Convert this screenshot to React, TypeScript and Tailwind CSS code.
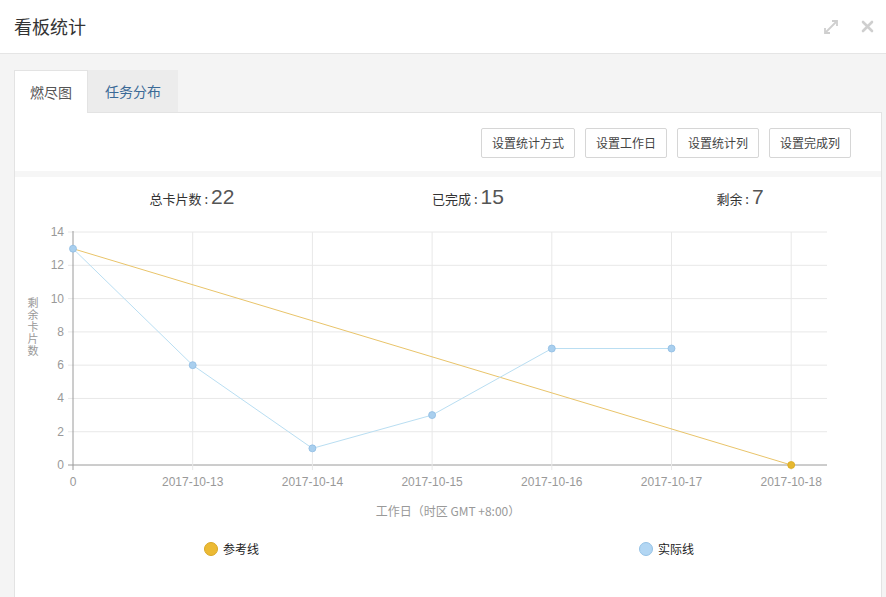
import React from "react";

const actual = [13, 6, 1, 3, 7, 7];
const ticks = ["0", "2017-10-13", "2017-10-14", "2017-10-15", "2017-10-16", "2017-10-17", "2017-10-18"];

// chart coords are relative to the svg (page x=15)
const X0 = 58;
const STEP_X = 119.7;
const Y0 = 252;
const STEP_Y = 16.64;
const px = (i: number) => X0 + i * STEP_X;
const py = (v: number) => Y0 - v * STEP_Y;

function BurnChart() {
  const yVals = [0, 2, 4, 6, 8, 10, 12, 14];
  const pts = actual.map((v, i) => `${px(i)},${py(v)}`).join(" ");
  return (
    <svg width="866" height="313" className="block" style={{ fontFamily: "'Liberation Sans', 'Noto Sans CJK SC', sans-serif" }}>
      {yVals.map((v) => (
        <g key={v}>
          <line x1={X0 - 5} x2={812} y1={py(v)} y2={py(v)} stroke={v === 0 ? "#9a9a9a" : "#e8e8e8"} strokeWidth="1" />
          <text x={X0 - 9} y={py(v) + 4} textAnchor="end" fontSize="12" fill="#999">{v}</text>
        </g>
      ))}
      {ticks.map((t, i) => (
        <g key={t}>
          {i > 0 && <line x1={px(i)} x2={px(i)} y1={py(14)} y2={Y0 + 5} stroke="#e8e8e8" />}
          <text x={px(i)} y={Y0 + 21} textAnchor="middle" fontSize="12" fill="#999">{t}</text>
        </g>
      ))}
      <line x1={X0} x2={X0} y1={py(14) - 1} y2={Y0 + 5} stroke="#9a9a9a" />
      <text
        x={18}
        y={84}
        fontSize="11"
        fill="#999"
        letterSpacing="1"
        style={{ fontFamily: "'Noto Sans CJK SC', sans-serif", writingMode: "vertical-rl" }}
      >
        剩余卡片数
      </text>
      <line x1={px(0)} y1={py(13)} x2={px(6)} y2={py(0)} stroke="#e9c46a" strokeWidth="1" />
      <polyline points={pts} fill="none" stroke="#b9def2" strokeWidth="1" />
      {actual.map((v, i) => (
        <circle key={i} cx={px(i)} cy={py(v)} r="3.5" fill="#a9cfee" stroke="#8fbde3" strokeWidth="0.8" />
      ))}
      <circle cx={px(6)} cy={py(0)} r="3.5" fill="#e6b830" stroke="#d9a820" strokeWidth="0.8" />
      <text x={433} y={303} textAnchor="middle" fontSize="12" fill="#999" style={{ fontFamily: "'Noto Sans CJK SC', sans-serif" }}>
        工作日（时区 GMT +8:00）
      </text>
    </svg>
  );
}

function Stat({ label, value }: { label: string; value: number }) {
  return (
    <>
      {label} :{" "}
      <span className="text-[21px] text-[#555]" style={{ fontFamily: "'Liberation Sans', sans-serif" }}>
        {value}
      </span>
    </>
  );
}

export default function App() {
  const buttons = ["设置统计方式", "设置工作日", "设置统计列", "设置完成列"];
  return (
    <div className="w-[886px] h-[597px] overflow-hidden bg-[#f4f4f4] text-[#333]" style={{ fontFamily: "'Noto Sans CJK SC', 'Liberation Sans', sans-serif" }}>
      {/* header */}
      <div className="h-[54px] bg-white border-b border-[#e5e5e5] flex items-center justify-between pl-[14px] pr-[12px]">
        <h1 className="text-[18px] text-[#333]">看板统计</h1>
        <div className="flex items-center gap-[22px]">
          <svg width="16" height="16" viewBox="0 0 16 16" fill="none" stroke="#cfcfcf" strokeWidth="1.8">
            <path d="M2 14 L14 2" />
            <path d="M9 2 H14 V7" />
            <path d="M2 9 V14 H7" />
          </svg>
          <svg width="13" height="13" viewBox="0 0 13 13" stroke="#cfcfcf" strokeWidth="2.6" strokeLinecap="round">
            <path d="M2 2 L11 11 M11 2 L2 11" />
          </svg>
        </div>
      </div>

      {/* tabs */}
      <div className="pt-[16px] px-[14px]">
        <div className="flex h-[42px] items-stretch">
          <div className="w-[74px] bg-white border border-b-0 border-[#e3e3e3] flex items-center justify-center text-[14px] text-[#555] relative z-10 -mb-px">
            燃尽图
          </div>
          <div className="w-[90px] bg-[#ececec] flex items-center justify-center text-[14px] text-[#3b6a97]">
            任务分布
          </div>
        </div>

        <div className="w-[868px] bg-white border border-[#e3e3e3]">
          <div className="flex justify-end gap-[10px] pt-[15px] pr-[30px] h-[58px]">
            {buttons.map((b) => (
              <button key={b} className="h-[30px] px-[10px] border border-[#d6d6d6] rounded-[2px] bg-white text-[12px] text-[#444]">
                {b}
              </button>
            ))}
          </div>
          <div className="h-[6px] bg-[#f6f6f6]" />
          <div className="flex items-baseline pt-[4px] h-[36px] text-[13px] text-[#333]">
            <div className="w-[354px] shrink-0 text-center">
              <Stat label="总卡片数" value={22} />
            </div>
            <div className="w-[198px] shrink-0 text-center">
              <Stat label="已完成" value={15} />
            </div>
            <div className="w-[314px] shrink-0 pl-[32px] text-center">
              <Stat label="剩余" value={7} />
            </div>
          </div>
          <BurnChart />
          <div className="flex items-center h-[30px] mt-[8px] text-[12px] text-[#222]">
            <div className="ml-[189px] flex items-center gap-[5px]">
              <span className="w-[14px] h-[14px] rounded-full bg-[#ecba34] border border-[#d9a826]" />
              参考线
            </div>
            <div className="ml-[380px] flex items-center gap-[5px]">
              <span className="w-[14px] h-[14px] rounded-full bg-[#b2d6f3] border border-[#95c2e6]" />
              实际线
            </div>
          </div>
          <div className="h-[60px]" />
        </div>
      </div>
    </div>
  );
}
